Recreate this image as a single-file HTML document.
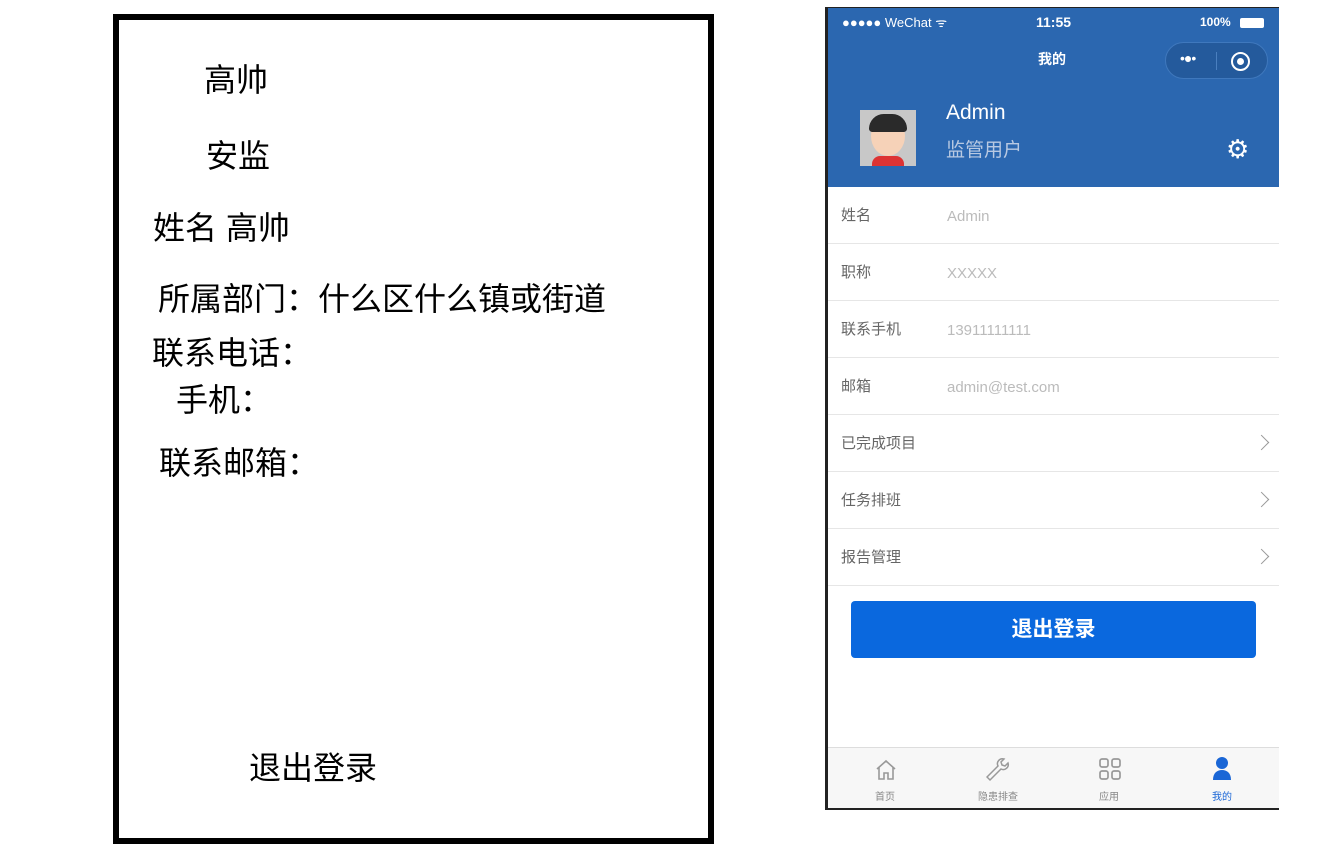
<!DOCTYPE html>
<html><head><meta charset="utf-8"><style>
*{margin:0;padding:0;box-sizing:border-box}
body{width:1334px;height:846px;background:#fff;position:relative;overflow:hidden;font-family:"Liberation Sans","Noto Sans CJK SC",sans-serif}
.a{position:absolute;white-space:nowrap;line-height:1}
.box{position:absolute;left:113px;top:14px;width:601px;height:830px;border:6px solid #000}
.lt{font-size:32px;color:#000}
.ph{position:absolute;left:825px;top:7px;width:454px;height:803px;border-left:3px solid #222;border-top:1px solid #222;border-bottom:3px solid #222;background:#fff}
.hdr{position:absolute;left:0;top:0;width:451px;height:179px;background:#2b67b0}
.row{position:absolute;left:0;width:451px;height:57px;border-bottom:1px solid #e6e6e6;font-size:15px;color:#666}
.row .k{position:absolute;left:13px;top:21px;line-height:1}
.row .v{position:absolute;left:119px;top:22px;color:#bbb;line-height:1}
.chev{position:absolute;right:12px;top:22px;width:11px;height:11px;border-right:1.5px solid #999;border-top:1.5px solid #999;transform:rotate(45deg)}
.tab{position:absolute;top:739px;left:0;width:451px;height:61px;background:#f7f7f7;border-top:1px solid #ddd}
.tl{position:absolute;font-size:10px;color:#888;top:40px;transform:translateX(-50%)}
</style></head><body>
<div class="box"></div>
<div class="a lt" style="left:204px;top:64px">高帅</div>
<div class="a lt" style="left:206px;top:140px">安监</div>
<div class="a lt" style="left:153px;top:212px">姓名 高帅</div>
<div class="a lt" style="left:158px;top:283px">所属部门：什么区什么镇或街道</div>
<div class="a lt" style="left:152px;top:337px">联系电话：</div>
<div class="a lt" style="left:176px;top:384px">手机：</div>
<div class="a lt" style="left:159px;top:447px">联系邮箱：</div>
<div class="a lt" style="left:249px;top:752px">退出登录</div>

<div class="ph">
 <div class="hdr">
  <div class="a" style="left:14px;top:8px;font-size:13px;color:#fff">●●●●● WeChat ᯤ</div>
  <div class="a" style="left:208px;top:7px;font-size:14px;color:#fff;font-weight:bold">11:55</div>
  <div class="a" style="left:372px;top:8px;font-size:12px;color:#fff;font-weight:bold">100%</div>
  <div class="a" style="left:412px;top:10px;width:24px;height:10px;background:#fff;border-radius:2px"></div>
  <div class="a" style="left:210px;top:44px;font-size:14px;color:#fff;font-weight:bold">我的</div>
  <div class="a" style="left:337px;top:34px;width:103px;height:37px;border-radius:19px;background:#245a9c;border:1px solid #3f78bd"></div>
  <div class="a" style="left:352px;top:43px;font-size:14px;color:#fff;letter-spacing:-1px">•●•</div>
  <div class="a" style="left:388px;top:44px;width:1px;height:18px;background:#4a7fbf"></div>
  <div class="a" style="left:403px;top:44px;width:19px;height:19px;border:2.5px solid #fff;border-radius:50%"></div>
  <div class="a" style="left:409px;top:50px;width:7px;height:7px;background:#fff;border-radius:50%"></div>
  <div class="a" style="left:32px;top:102px;width:56px;height:56px;background:#c8c8c8">
   <div style="position:absolute;left:11px;top:6px;width:34px;height:40px;border-radius:50%;background:#f6d2b8"></div>
   <div style="position:absolute;left:9px;top:4px;width:38px;height:18px;border-radius:18px 18px 4px 4px;background:#2a2a2a"></div>
   <div style="position:absolute;left:12px;top:46px;width:32px;height:10px;border-radius:8px 8px 0 0;background:#d33"></div>
  </div>
  <div class="a" style="left:118px;top:94px;font-size:21px;color:#fff">Admin</div>
  <div class="a" style="left:118px;top:133px;font-size:19px;color:#b8c9e2">监管用户</div>
  <div class="a" style="left:398px;top:128px;font-size:26px;color:#fff">⚙</div>
 </div>
 <div class="row" style="top:179px"><span class="k">姓名</span><span class="v">Admin</span></div>
 <div class="row" style="top:236px"><span class="k">职称</span><span class="v">XXXXX</span></div>
 <div class="row" style="top:293px"><span class="k">联系手机</span><span class="v">13911111111</span></div>
 <div class="row" style="top:350px"><span class="k">邮箱</span><span class="v">admin@test.com</span></div>
 <div class="row" style="top:407px"><span class="k">已完成项目</span><i class="chev"></i></div>
 <div class="row" style="top:464px"><span class="k">任务排班</span><i class="chev"></i></div>
 <div class="row" style="top:521px"><span class="k">报告管理</span><i class="chev"></i></div>
 <div class="a" style="left:23px;top:593px;width:405px;height:57px;background:#0a68de;border-radius:4px;color:#fff;font-size:21px;font-weight:bold;text-align:center;line-height:57px">退出登录</div>
 <div class="tab">
  <svg class="a" style="left:46px;top:10px" width="24" height="24" viewBox="0 0 24 24" fill="none" stroke="#999" stroke-width="1.6"><path d="M3 11L12 3l9 8M5 9v12h5v-6h4v6h5V9"/></svg>
  <svg class="a" style="left:158px;top:9px" width="26" height="26" viewBox="0 0 26 26" fill="none" stroke="#999" stroke-width="1.5"><path d="M4 23l11-11a5 5 0 0 0 7-6l-3 3-3-1-1-3 3-3a5 5 0 0 0-6 7L1 20z"/></svg>
  <svg class="a" style="left:270px;top:9px" width="24" height="24" viewBox="0 0 24 24" fill="none" stroke="#999" stroke-width="1.7"><rect x="2" y="2" width="8" height="8" rx="2"/><rect x="14" y="2" width="8" height="8" rx="2"/><rect x="2" y="14" width="8" height="8" rx="2"/><rect x="14" y="14" width="8" height="8" rx="2"/></svg>
  <svg class="a" style="left:384px;top:8px" width="20" height="26" viewBox="0 0 20 26" fill="#1a66d6"><circle cx="10" cy="7" r="6"/><path d="M1 24c0-7 4-10 9-10s9 3 9 10z"/></svg>
  <div class="tl" style="left:57px">首页</div>
  <div class="tl" style="left:170px">隐患排查</div>
  <div class="tl" style="left:281px">应用</div>
  <div class="tl" style="left:394px;color:#1a66d6">我的</div>
 </div>
</div>
</body></html>
